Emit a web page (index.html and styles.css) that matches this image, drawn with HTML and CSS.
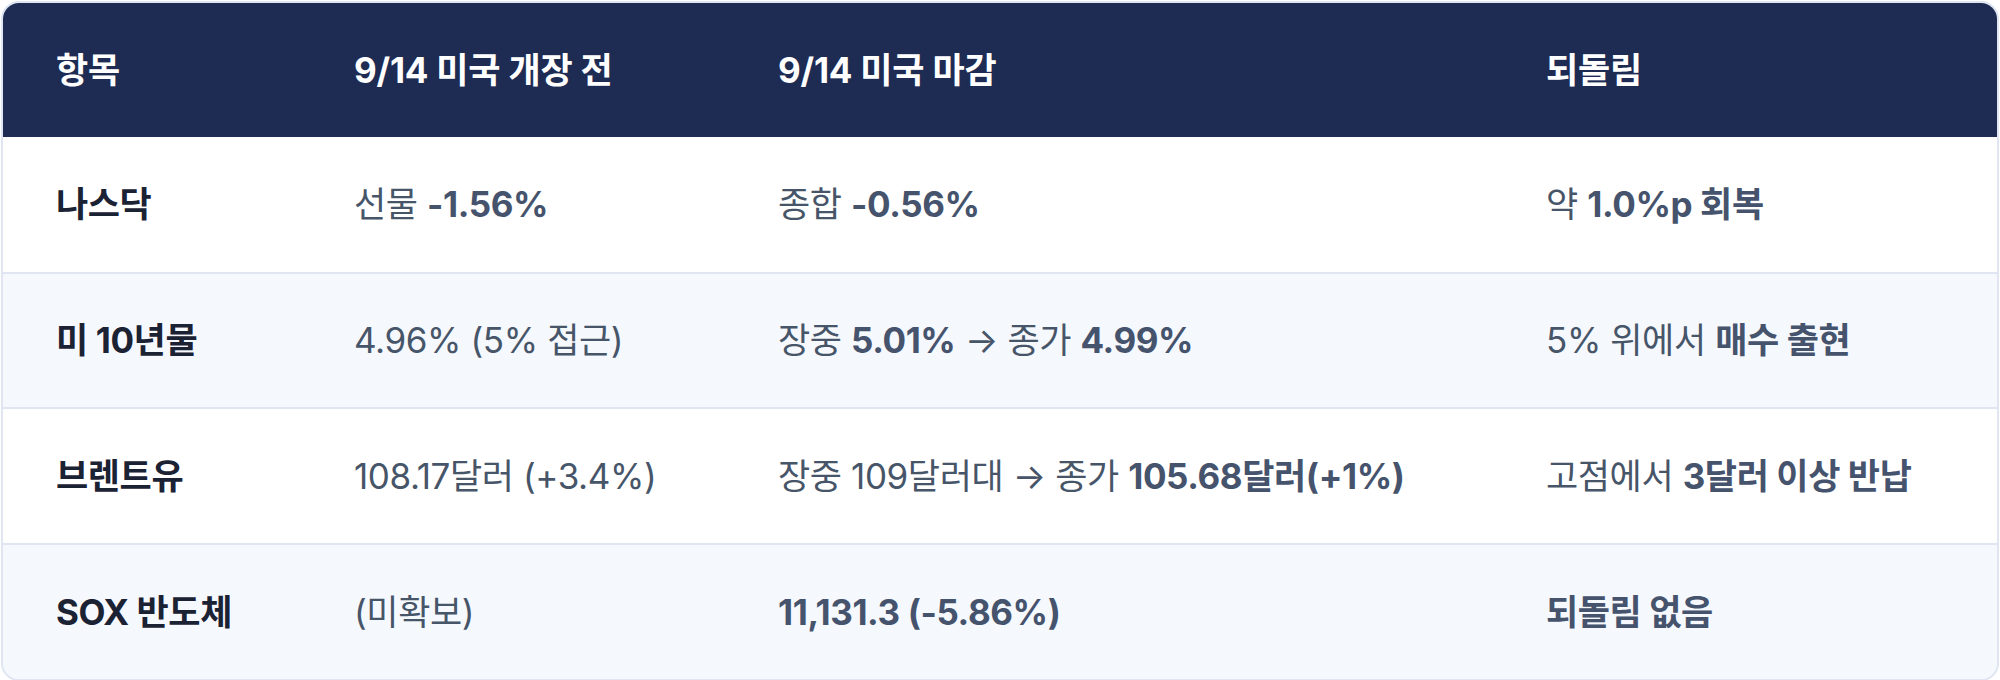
FILE: index.html
```html
<!DOCTYPE html>
<html lang="ko">
<head>
<meta charset="utf-8">
<title>표</title>
<link rel="stylesheet" href="styles.css">
</head>
<body>
<div class="wrap">
  <table class="tbl">
    <colgroup>
      <col class="c1"><col class="c2"><col class="c3"><col class="c4">
    </colgroup>
    <thead>
      <tr><th>항목</th><th>9/14 미국 개장 전</th><th>9/14 미국 마감</th><th>되돌림</th></tr>
    </thead>
    <tbody>
      <tr>
        <td class="name">나스닥</td>
        <td>선물 <b>-1.56%</b></td>
        <td>종합 <b>-0.56%</b></td>
        <td>약 <b>1.0%p 회복</b></td>
      </tr>
      <tr class="alt">
        <td class="name">미 10년물</td>
        <td>4.96% (5% 접근)</td>
        <td>장중 <b>5.01%</b> → 종가 <b>4.99%</b></td>
        <td>5% 위에서 <b>매수 출현</b></td>
      </tr>
      <tr>
        <td class="name">브렌트유</td>
        <td>108.17달러 (+3.4%)</td>
        <td>장중 109달러대 → 종가 <b>105.68달러(+1%)</b></td>
        <td>고점에서 <b>3달러 이상 반납</b></td>
      </tr>
      <tr class="alt last">
        <td class="name">SOX 반도체</td>
        <td>(미확보)</td>
        <td><b>11,131.3 (-5.86%)</b></td>
        <td><b>되돌림 없음</b></td>
      </tr>
    </tbody>
  </table>
</div>
</body>
</html>
```

FILE: styles.css
```css
html, body {
  margin: 0;
  padding: 0;
  background: #ffffff;
}
body {
  padding: 1px;
  font-family: "Inter", "Noto Sans CJK KR", sans-serif;
}
.wrap {
  width: 1994px;
  border: 2px solid #dfe5f1;
  border-radius: 18px;
  overflow: hidden;
  background: #ffffff;
}
.tbl {
  width: 100%;
  border-collapse: collapse;
  table-layout: fixed;
}
.c1 { width: 298px; }
.c2 { width: 424px; }
.c3 { width: 768px; }
.c4 { width: auto; }
.tbl th {
  background: #1e2b53;
  color: #ffffff;
  font-weight: 700;
  font-size: 35px;
  text-align: left;
  height: 134px;
  padding: 0 0 0 53px;
  line-height: 40px;
  letter-spacing: -0.2px;
  box-sizing: border-box;
}
.tbl td {
  font-size: 35px;
  color: #475569;
  font-weight: 400;
  height: 135.5px;
  padding: 0 0 0 53px;
  line-height: 40px;
  border-bottom: 2px solid #dfe5f1;
  letter-spacing: -0.4px;
  white-space: nowrap;
  box-sizing: border-box;
}
.tbl tr.last td { border-bottom: none; }
.tbl tr.alt td { background: #f5f8fd; }
.tbl td b { font-weight: 700; color: #46536d; }
.tbl td.name { color: #1a2233; font-weight: 700; }
```
